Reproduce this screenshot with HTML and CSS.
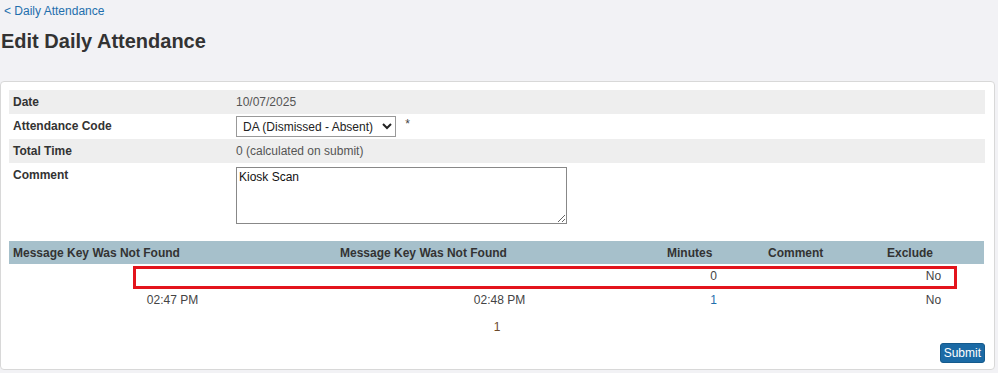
FILE: index.html
```html
<!DOCTYPE html>
<html lang="en">

<head>
    <meta charset="UTF-8">
    <title>Edit Daily Attendance</title>
    <link rel="stylesheet" href="styles.css">
</head>

<body>
    <div class="page">
        <a class="back-link" href="#">&lt; Daily Attendance</a>
        <h1>Edit Daily Attendance</h1>

        <div class="card">
            <table class="form-table">
                <tr class="shaded">
                    <th>Date</th>
                    <td>10/07/2025</td>
                </tr>
                <tr>
                    <th>Attendance Code</th>
                    <td>
                        <select class="code-select">
                            <option>DA (Dismissed - Absent)</option>
                        </select>
                        <span class="required">*</span>
                    </td>
                </tr>
                <tr class="shaded">
                    <th>Total Time</th>
                    <td>0 (calculated on submit)</td>
                </tr>
                <tr>
                    <th>Comment</th>
                    <td><textarea class="comment-box">Kiosk Scan</textarea></td>
                </tr>
            </table>

            <div class="grid-wrap">
                <table class="grid">
                    <colgroup>
                        <col style="width: 327px">
                        <col style="width: 327px">
                        <col style="width: 101px">
                        <col style="width: 119px">
                        <col style="width: 101px">
                    </colgroup>
                    <thead>
                        <tr>
                            <th>Message Key Was Not Found</th>
                            <th>Message Key Was Not Found</th>
                            <th>Minutes</th>
                            <th>Comment</th>
                            <th>Exclude</th>
                        </tr>
                    </thead>
                    <tbody>
                        <tr>
                            <td></td>
                            <td></td>
                            <td>0</td>
                            <td></td>
                            <td>No</td>
                        </tr>
                        <tr>
                            <td>02:47 PM</td>
                            <td>02:48 PM</td>
                            <td><a href="#" class="minutes-link">1</a></td>
                            <td></td>
                            <td>No</td>
                        </tr>
                    </tbody>
                </table>
                <!-- highlight drawn over the first row -->
                <div class="highlight"></div>
            </div>

            <div class="pager">1</div>

            <div class="actions">
                <button type="button" class="submit-btn">Submit</button>
            </div>
        </div>
    </div>
</body>

</html>
```

FILE: styles.css
```css
body {
    margin: 0;
    padding: 0;
    font-family: "Liberation Sans", Arial, sans-serif;
    font-size: 12px;
    color: #333;
    background-color: #f2f2f5;
}

.page {
    width: 995px;
}

.back-link {
    display: block;
    padding: 4px 0 0 4px;
    height: 16px;
    font-size: 12px;
    color: #1f6fad;
    text-decoration: none;
}

h1 {
    margin: 10px 0 0 1px;
    height: 51px;
    font-size: 20px;
    font-weight: bold;
    color: #333;
}

.card {
    background-color: #fff;
    border: 1px solid #d8d8d8;
    border-radius: 4px;
    padding: 8px 9px 7px 8px;
    box-sizing: border-box;
    height: 289px;
}

.form-table {
    width: 100%;
    border-collapse: collapse;
}

.form-table th,
.form-table td {
    text-align: left;
    vertical-align: top;
    padding: 5px 4px;
    height: 13px;
}

.form-table th {
    width: 215px;
    font-weight: bold;
    color: #333;
}

.form-table td {
    color: #555;
}

.form-table tr.shaded th,
.form-table tr.shaded td {
    background-color: #eeeeee;
}

.code-select {
    width: 160px;
    height: 21px;
    margin: -3px 0 -3px 0;
    font-family: "Liberation Sans", Arial, sans-serif;
    font-size: 12px;
    color: #222;
    border: 1px solid #999;
    border-radius: 0;
    background-color: #fff;
    padding: 0 2px;
}

.required {
    display: inline-block;
    margin-left: 6px;
    vertical-align: top;
    margin-top: -2px;
    color: #444;
}

.comment-box {
    width: 331px;
    height: 57px;
    box-sizing: border-box;
    margin: -1px 0 0 0;
    font-family: "Liberation Sans", Arial, sans-serif;
    font-size: 12px;
    color: #111;
    border: 1px solid #888;
    padding: 2px 2px;
    display: block;
}

.grid-wrap {
    position: relative;
    margin-top: 12px;
}

.grid {
    width: 975px;
    table-layout: fixed;
    border-collapse: collapse;
}

.grid th {
    background-color: #a6c0cb;
    text-align: left;
    padding: 0 4px;
    height: 23px;
    font-weight: bold;
    color: #333;
}

.grid td {
    text-align: center;
    height: 24px;
    padding: 0 4px;
    color: #444;
}

.minutes-link {
    color: #1f6fad;
    text-decoration: none;
}

.highlight {
    position: absolute;
    left: 124px;
    top: 25px;
    width: 824px;
    height: 23px;
    border: 3px solid #e3141c;
    box-sizing: border-box;
}

.pager {
    text-align: center;
    margin-top: 8px;
    height: 16px;
    color: #6b4a2a;
}

.actions {
    display: flex;
    justify-content: flex-end;
    margin-top: 7px;
}

.submit-btn {
    background-color: #1b6aa5;
    color: #fff;
    border: 1px solid #155a8c;
    border-radius: 3px;
    font-family: "Liberation Sans", Arial, sans-serif;
    font-size: 12px;
    padding: 2px 3px;
    height: 20px;
    cursor: pointer;
}
```
